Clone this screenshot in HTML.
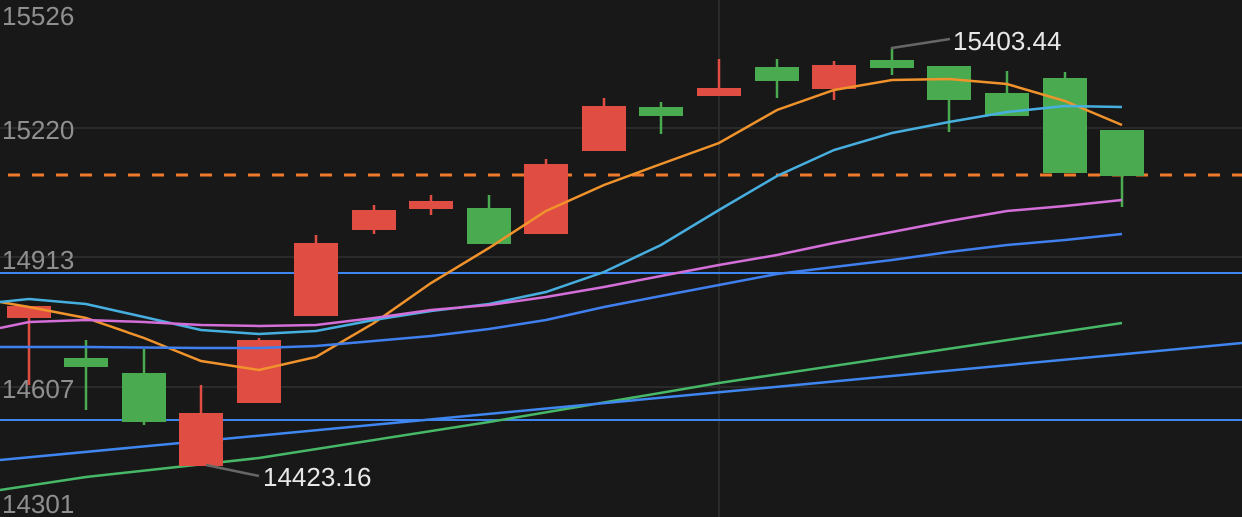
<!DOCTYPE html><html><head><style>body{margin:0;background:#181818;}svg{display:block}text{font-family:"Liberation Sans",sans-serif}</style></head><body>
<svg width="1242" height="517" xmlns="http://www.w3.org/2000/svg">
<rect width="1242" height="517" fill="#181818"/>
<g stroke="#2a2a2a" stroke-width="2"><line x1="0" y1="128" x2="1242" y2="128"/><line x1="0" y1="257" x2="1242" y2="257"/><line x1="0" y1="387" x2="1242" y2="387"/><line x1="719" y1="0" x2="719" y2="517"/></g>
<g fill="#8f8f8f" font-size="26"><text x="2" y="25">15526</text><text x="2" y="139">15220</text><text x="2" y="269">14913</text><text x="2" y="398">14607</text><text x="2" y="513">14301</text></g>
<line x1="0" y1="273" x2="1242" y2="273" stroke="#3f86f0" stroke-width="2"/>
<line x1="0" y1="420" x2="1242" y2="420" stroke="#3f86f0" stroke-width="2"/>
<line x1="8" y1="175" x2="1242" y2="175" stroke="#f07a2c" stroke-width="3" stroke-dasharray="12,12"/>
<g fill="none" stroke-width="2.5">
<polyline stroke="#46b868" points="0,490 86,477 259,458 489,422 719,383 1122,323"/>
<polyline stroke="#3f86f0" points="0,460 1242,343"/>
</g>
<g stroke-width="2.5">
<line x1="29" y1="306" x2="29" y2="385" stroke="#e04d42"/><rect x="7" y="306" width="44" height="12" fill="#e04d42"/>
<line x1="86" y1="340" x2="86" y2="410" stroke="#4aaa4f"/><rect x="64" y="358" width="44" height="9" fill="#4aaa4f"/>
<line x1="144" y1="349" x2="144" y2="425" stroke="#4aaa4f"/><rect x="122" y="373" width="44" height="49" fill="#4aaa4f"/>
<line x1="201" y1="385" x2="201" y2="466" stroke="#e04d42"/><rect x="179" y="413" width="44" height="53" fill="#e04d42"/>
<line x1="259" y1="338" x2="259" y2="403" stroke="#e04d42"/><rect x="237" y="340" width="44" height="63" fill="#e04d42"/>
<line x1="316" y1="235" x2="316" y2="316" stroke="#e04d42"/><rect x="294" y="243" width="44" height="73" fill="#e04d42"/>
<line x1="374" y1="205" x2="374" y2="234" stroke="#e04d42"/><rect x="352" y="210" width="44" height="20" fill="#e04d42"/>
<line x1="431" y1="195" x2="431" y2="215" stroke="#e04d42"/><rect x="409" y="201" width="44" height="8" fill="#e04d42"/>
<line x1="489" y1="195" x2="489" y2="244" stroke="#4aaa4f"/><rect x="467" y="208" width="44" height="36" fill="#4aaa4f"/>
<line x1="546" y1="159" x2="546" y2="234" stroke="#e04d42"/><rect x="524" y="164" width="44" height="70" fill="#e04d42"/>
<line x1="604" y1="98" x2="604" y2="151" stroke="#e04d42"/><rect x="582" y="106" width="44" height="45" fill="#e04d42"/>
<line x1="661" y1="102" x2="661" y2="134" stroke="#4aaa4f"/><rect x="639" y="107" width="44" height="9" fill="#4aaa4f"/>
<line x1="719" y1="59" x2="719" y2="96" stroke="#e04d42"/><rect x="697" y="88" width="44" height="8" fill="#e04d42"/>
<line x1="777" y1="59" x2="777" y2="98" stroke="#4aaa4f"/><rect x="755" y="67" width="44" height="14" fill="#4aaa4f"/>
<line x1="834" y1="61" x2="834" y2="100" stroke="#e04d42"/><rect x="812" y="65" width="44" height="24" fill="#e04d42"/>
<line x1="892" y1="49" x2="892" y2="75" stroke="#4aaa4f"/><rect x="870" y="60" width="44" height="8" fill="#4aaa4f"/>
<line x1="949" y1="66" x2="949" y2="132" stroke="#4aaa4f"/><rect x="927" y="66" width="44" height="34" fill="#4aaa4f"/>
<line x1="1007" y1="71" x2="1007" y2="116" stroke="#4aaa4f"/><rect x="985" y="93" width="44" height="23" fill="#4aaa4f"/>
<line x1="1065" y1="72" x2="1065" y2="173" stroke="#4aaa4f"/><rect x="1043" y="78" width="44" height="95" fill="#4aaa4f"/>
<line x1="1122" y1="176" x2="1122" y2="207" stroke="#4aaa4f"/><rect x="1100" y="130" width="44" height="46" fill="#4aaa4f"/>
</g>
<g fill="none" stroke-width="2.5">
<polyline stroke="#f0932c" points="0,302 29,307 86,318 144,338 201,361 259,370 316,357 374,323 431,283 489,248 546,211 604,185 661,164 719,143 777,110 834,90 892,80 949,79 1007,84 1065,101 1122,125"/>
<polyline stroke="#47afe0" points="0,302 29,299 86,304 144,317 201,330 259,334 316,331 374,320 431,311 489,304 546,292 604,272 661,245 719,210 777,176 834,150 892,133 949,122 1007,112 1065,106 1122,107"/>
<polyline stroke="#d46ed8" points="0,328 29,322 86,320 144,322 201,325 259,326 316,325 374,318 431,310 489,305 546,297 604,287 661,276 719,265 777,255 834,243 892,232 949,221 1007,211 1065,206 1122,200"/>
<polyline stroke="#3f7fee" points="0,347 86,347 201,348 259,348 316,346 374,341 431,336 489,329 546,320 604,307 661,296 719,285 777,274 834,267 892,260 949,252 1007,245 1065,240 1122,234"/>
</g>
<g stroke="#666" stroke-width="2.5" fill="none"><polyline points="892,49 892,48 950,39"/><line x1="206" y1="465" x2="259" y2="476"/></g>
<g fill="#e8e8e8" font-size="26"><text x="953" y="50">15403.44</text><text x="263" y="486">14423.16</text></g>
</svg></body></html>
